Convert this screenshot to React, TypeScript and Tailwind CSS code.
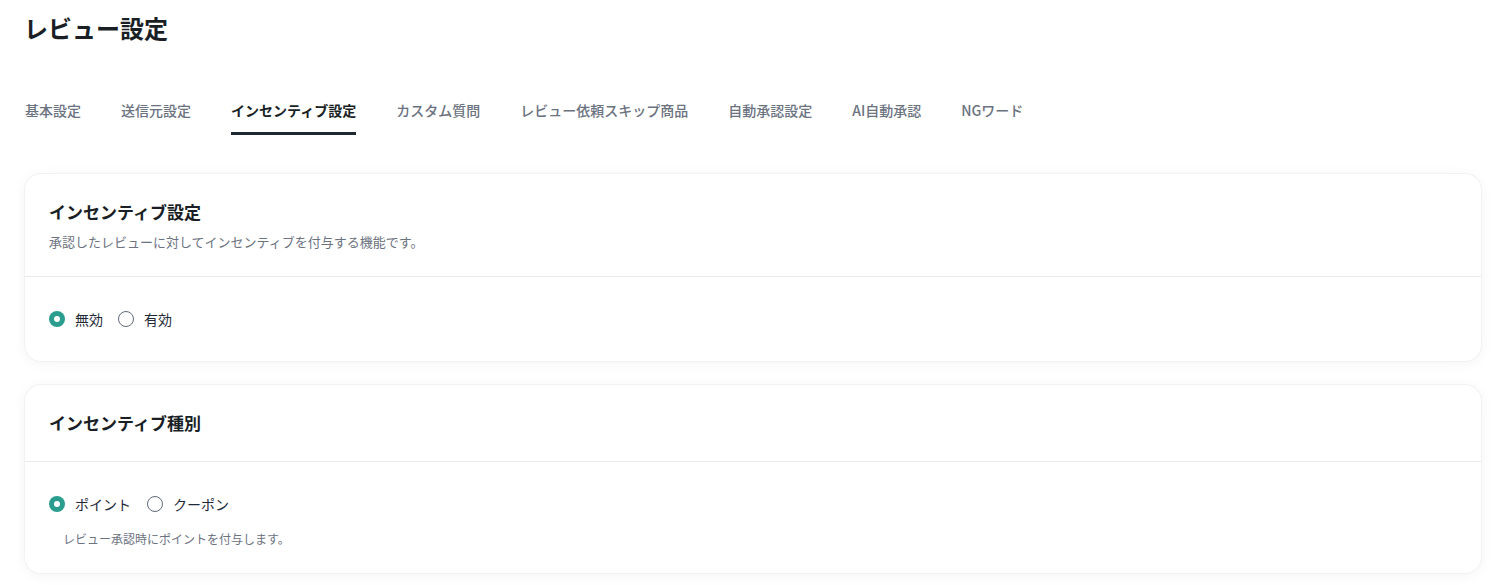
import { useState } from "react";

const tabs = [
  "基本設定",
  "送信元設定",
  "インセンティブ設定",
  "カスタム質問",
  "レビュー依頼スキップ商品",
  "自動承認設定",
  "AI自動承認",
  "NGワード",
];

function Radio({ checked, label, onClick }: { checked: boolean; label: string; onClick: () => void }) {
  return (
    <button type="button" onClick={onClick} className="flex items-center gap-[10px] cursor-pointer">
      {checked ? (
        <span className="w-4 h-4 rounded-full bg-[#2a9d8f] flex items-center justify-center">
          <span className="w-[6px] h-[6px] rounded-full bg-white" />
        </span>
      ) : (
        <span className="w-4 h-4 rounded-full border-[1.5px] border-[#5f6b78] bg-white" />
      )}
      <span className="text-[14px] leading-5 text-[#1f2937]">{label}</span>
    </button>
  );
}

function Card({ title, desc, children }: { title: string; desc?: string; children: React.ReactNode }) {
  return (
    <div className="bg-white rounded-2xl shadow-[0_0_0_1px_#f1f2f4,0_2px_14px_rgba(15,23,42,0.05)]">
      <div className="px-6 pt-6 pb-6 border-b border-[#e8eaed]">
        <h2 className="text-[17px] leading-7 font-bold text-[#1a1f26]">{title}</h2>
        {desc && <p className="text-[13px] leading-5 text-[#6b7280] mt-[6px]">{desc}</p>}
      </div>
      {children}
    </div>
  );
}

export default function App() {
  const [active, setActive] = useState(2);
  const [enabled, setEnabled] = useState(false);
  const [kind, setKind] = useState<"point" | "coupon">("point");

  return (
    <div className="min-h-screen bg-white px-[25px] pt-[12px] pb-3 font-['Noto_Sans_CJK_JP','Noto_Sans',sans-serif]">
      <h1 className="text-[24px] leading-8 font-bold text-[#1a1f26] -ml-px">レビュー設定</h1>

      <nav className="flex gap-10 mt-[56px]">
        {tabs.map((t, i) => (
          <button
            key={t}
            type="button"
            onClick={() => setActive(i)}
            className={
              i === active
                ? "text-[14px] leading-5 font-bold text-[#1a1f26] pb-[12px] border-b-[3px] border-[#1f2933]"
                : "text-[14px] leading-5 font-medium text-[#6b7280] pb-[12px] border-b-[3px] border-transparent"
            }
          >
            {t}
          </button>
        ))}
      </nav>

      <div className="mt-[39px] flex flex-col gap-6">
        <Card title="インセンティブ設定" desc="承認したレビューに対してインセンティブを付与する機能です。">
          <div className="px-6 pt-[32px] pb-[32px] flex items-center gap-[15px]">
            <Radio checked={!enabled} label="無効" onClick={() => setEnabled(false)} />
            <Radio checked={enabled} label="有効" onClick={() => setEnabled(true)} />
          </div>
        </Card>

        <Card title="インセンティブ種別">
          <div className="px-6 pt-[32px] pb-[24px]">
            <div className="flex items-center gap-4">
              <Radio checked={kind === "point"} label="ポイント" onClick={() => setKind("point")} />
              <Radio checked={kind === "coupon"} label="クーポン" onClick={() => setKind("coupon")} />
            </div>
            <p className="text-[12px] leading-5 text-[#6b7280] mt-[15px] pl-[14px]">
              {kind === "point" ? "レビュー承認時にポイントを付与します。" : "レビュー承認時にクーポンを付与します。"}
            </p>
          </div>
        </Card>
      </div>
    </div>
  );
}
